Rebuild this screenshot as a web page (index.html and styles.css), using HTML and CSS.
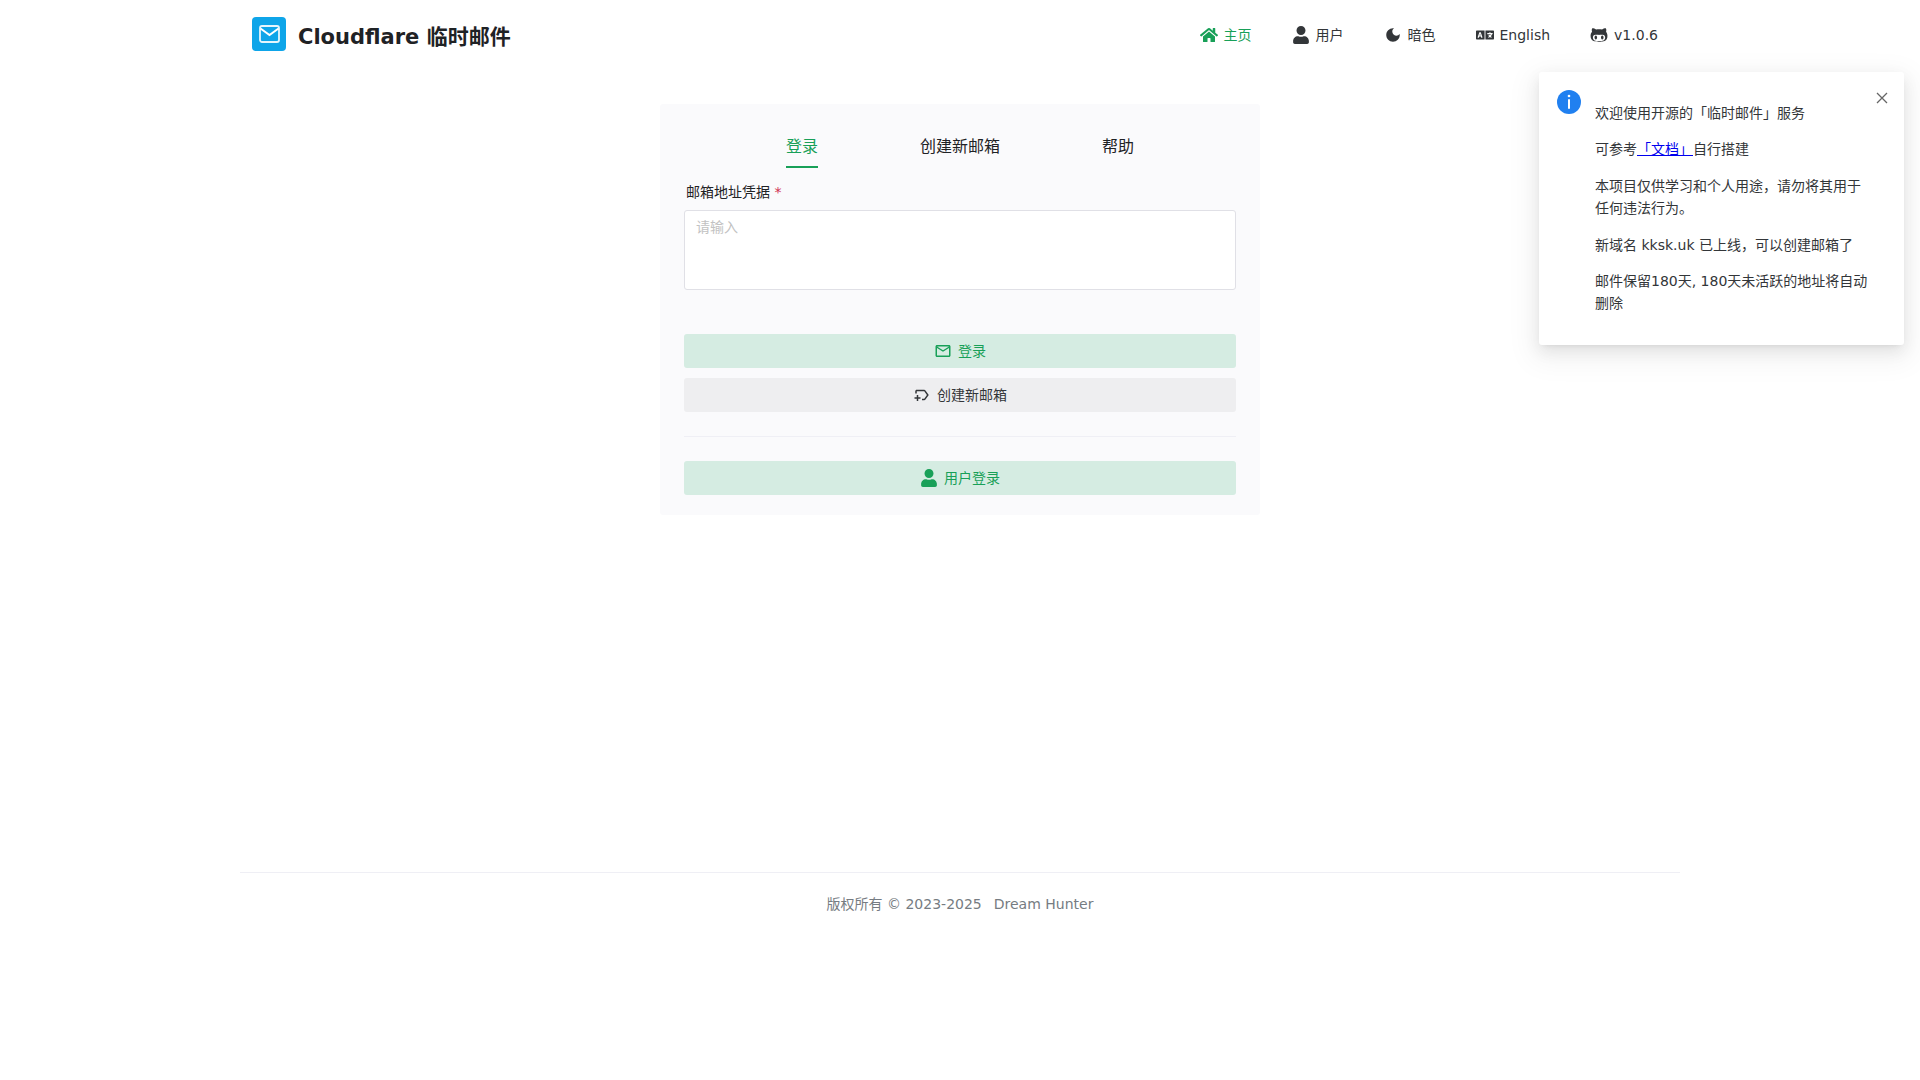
FILE: index.html
```html
<!DOCTYPE html>
<html lang="zh">
<head>
    <meta charset="UTF-8">
    <meta name="viewport" content="width=device-width, initial-scale=1.0">
    <title>Cloudflare 临时邮件</title>
    <link rel="stylesheet" href="styles.css">
</head>
<body>
    <div class="page">
        <header class="header">
            <div class="brand">
                <svg class="logo" viewBox="0 0 34 34" aria-hidden="true">
                    <rect width="34" height="34" rx="4" fill="#0ea5e9"/>
                    <rect x="8" y="9" width="19" height="16" rx="2" fill="none" stroke="#e6f6fd" stroke-width="1.800"/>
                    <path d="M8.500 11.500L17.500 18L26.500 11.500" fill="none" stroke="#fff" stroke-width="2"/>
                </svg>
                <h1>Cloudflare 临时邮件</h1>
            </div>
            <nav class="menu">
                <a href="#" class="active">
                    <svg class="icon" viewBox="0 0 576 512"><path d="M280.37 148.26L96 300.11V464a16 16 0 0 0 16 16l112.06-.29a16 16 0 0 0 15.92-16V368a16 16 0 0 1 16-16h64a16 16 0 0 1 16 16v95.64a16 16 0 0 0 16 16.05L464 480a16 16 0 0 0 16-16V300L295.67 148.26a12.19 12.19 0 0 0-15.3 0zM571.6 251.47L488 182.56V44.05a12 12 0 0 0-12-12h-56a12 12 0 0 0-12 12v72.61L318.47 43a48 48 0 0 0-61 0L4.34 251.47a12 12 0 0 0-1.6 16.9l25.5 31A12 12 0 0 0 45.15 301l235.22-193.74a12.19 12.19 0 0 1 15.3 0L530.9 301a12 12 0 0 0 16.9-1.6l25.5-31a12 12 0 0 0-1.7-16.93z"/></svg>
                    主页
                </a>
                <a href="#user">
                    <svg class="icon" viewBox="0 0 448 512"><path d="M224 256c70.7 0 128-57.3 128-128S294.7 0 224 0 96 57.3 96 128s57.3 128 128 128zm89.6 32h-16.7c-22.2 10.2-46.9 16-72.9 16s-50.6-5.8-72.9-16h-16.7C60.2 288 0 348.2 0 422.4V464c0 26.5 21.5 48 48 48h352c26.5 0 48-21.5 48-48v-41.6c0-74.2-60.2-134.4-134.4-134.4z"/></svg>
                    用户
                </a>
                <button type="button">
                    <svg class="icon" viewBox="0 0 24 24"><path d="M12 3c-4.970 0-9 4.030-9 9s4.030 9 9 9s9-4.030 9-9c0-.46-.04-.92-.1-1.360a5.389 5.389 0 0 1-4.400 2.260a5.403 5.403 0 0 1-3.140-9.800c-.44-.06-.9-.1-1.360-.1z"/></svg>
                    暗色
                </button>
                <button type="button">
                    <svg class="icon" viewBox="0 0 640 512"><path d="M152.1 236.2c-3.5-12.1-7.8-33.2-7.8-33.2h-.5s-4.3 21.1-7.8 33.2l-11.1 37.5H163zM616 96H336v320h280c13.3 0 24-10.7 24-24V120c0-13.3-10.7-24-24-24zm-24 120c0 6.6-5.4 12-12 12h-11.4c-6.9 23.6-21.7 47.4-42.7 69.9 8.4 6.4 17.1 12.5 26.1 18 5.5 3.4 7.3 10.5 4.1 16.2l-7.9 13.9c-3.4 5.9-10.9 7.8-16.7 4.3-12.6-7.8-24.5-16.1-35.4-24.9-10.9 8.7-22.7 17.1-35.4 24.9-5.8 3.5-13.3 1.6-16.7-4.3l-7.9-13.9c-3.2-5.6-1.4-12.8 4.2-16.2 9.3-5.7 18-11.7 26.1-18-7.9-8.4-14.9-17-21-25.7-4-5.7-2.2-13.6 3.7-17.1l6.5-3.9 7.3-4.3c5.4-3.2 12.4-1.7 16 3.4 5 7 10.8 14 17.4 20.9 13.5-14.2 23.8-28.900 30-43.200H412c-6.600 0-12-5.400-12-12v-16c0-6.600 5.400-12 12-12h64v-16c0-6.600 5.400-12 12-12h16c6.600 0 12 5.400 12 12v16h64c6.600 0 12 5.400 12 12zM0 120v272c0 13.3 10.7 24 24 24h280V96H24c-13.3 0-24 10.7-24 24zm58.900 216.100L116.400 167c1.700-4.900 6.200-8.100 11.400-8.100h32.500c5.100 0 9.700 3.300 11.400 8.100l57.500 169.100c2.600 7.800-3.100 15.900-11.400 15.900h-22.900a12 12 0 0 1-11.500-8.600l-9.400-31.900h-60.200l-9.100 31.800c-1.500 5.100-6.200 8.700-11.500 8.700H70.300c-8.200 0-14-8.100-11.400-15.900z"/></svg>
                    English
                </button>
                <a href="#github">
                    <svg class="icon" viewBox="0 0 480 512"><path d="M186.1 328.7c0 20.9-10.9 55.1-36.7 55.1s-36.7-34.2-36.7-55.1 10.9-55.1 36.7-55.1 36.7 34.2 36.7 55.1zM480 278.2c0 31.9-3.2 65.7-17.5 95-37.9 76.6-142.1 74.8-216.7 74.8-75.8 0-186.2 2.7-225.6-74.8-14.6-29-20.2-63.1-20.2-95 0-41.9 13.9-81.5 41.5-113.6-5.2-15.8-7.7-32.4-7.7-48.8 0-21.5 4.9-32.3 14.6-51.8 45.3 0 74.3 9 108.8 36 29-6.9 58.8-10 88.7-10 27 0 54.2 2.9 80.4 9.2 34-26.7 63-35.2 107.8-35.2 9.8 19.5 14.6 30.3 14.6 51.8 0 16.4-2.6 32.7-7.7 48.2 27.5 32.4 39 72.3 39 114.2zm-64.3 50.5c0-43.9-26.7-82.6-73.5-82.6-18.9 0-37 3.4-56 6-14.9 2.3-29.8 3.2-45.1 3.2-15.2 0-30.1-.9-45.1-3.2-18.7-2.6-37-6-56-6-46.8 0-73.5 38.7-73.5 82.6 0 87.8 80.4 101.3 150.4 101.3h48.2c70.3 0 150.6-13.4 150.6-101.3zm-82.6-55.1c-25.8 0-36.7 34.2-36.7 55.1s10.9 55.1 36.7 55.1 36.7-34.2 36.7-55.1-10.9-55.1-36.7-55.1z"/></svg>
                    v1.0.6
                </a>
            </nav>
        </header>

        <main class="main">
            <form class="card">
                <div class="tabs" role="tablist">
                    <button type="button" role="tab" class="tab active" aria-selected="true">登录</button>
                    <button type="button" role="tab" class="tab">创建新邮箱</button>
                    <button type="button" role="tab" class="tab">帮助</button>
                </div>

                <label class="label" for="credential">邮箱地址凭据 <span class="required">*</span></label>
                <textarea id="credential" class="textarea" placeholder="请输入"></textarea>

                <div class="actions">
                    <button type="button" class="btn primary">
                        <svg class="icon" viewBox="0 0 24 24"><path d="M22 6c0-1.100-.9-2-2-2H4c-1.100 0-2 .9-2 2v12c0 1.100.9 2 2 2h16c1.100 0 2-.9 2-2V6zm-2 0l-8 5l-8-5h16zm0 12H4V8l8 5l8-5v10z"/></svg>
                        登录
                    </button>
                    <button type="button" class="btn">
                        <svg class="icon" viewBox="0 0 24 24"><path d="M21 12l-4.370 6.160c-.37.52-.98.84-1.630.84h-3v-2h3l3.550-5L15 7H5v3H3V7c0-1.100.9-2 2-2h10c.65 0 1.260.31 1.630.84L21 12zm-11 3H7v-3H5v3H2v2h3v3h2v-3h3v-2z"/></svg>
                        创建新邮箱
                    </button>
                </div>
                <hr class="divider">
                <button type="button" class="btn primary">
                    <svg class="icon" viewBox="0 0 448 512"><path d="M224 256c70.7 0 128-57.3 128-128S294.7 0 224 0 96 57.3 96 128s57.3 128 128 128zm89.6 32h-16.7c-22.2 10.2-46.9 16-72.9 16s-50.6-5.8-72.9-16h-16.7C60.2 288 0 348.2 0 422.4V464c0 26.5 21.5 48 48 48h352c26.5 0 48-21.5 48-48v-41.6c0-74.2-60.2-134.4-134.4-134.4z"/></svg>
                    用户登录
                </button>
            </form>
        </main>

        <footer class="footer">
            <span>版权所有 © 2023-2025</span>
            <span>Dream Hunter</span>
        </footer>
    </div>

    <aside class="notification" role="status">
        <svg class="info" viewBox="0 0 24 24" aria-hidden="true">
            <circle cx="12" cy="12" r="12" fill="#2080f0"/>
            <circle cx="12" cy="6" r="1.300" fill="#fff"/>
            <rect x="11" y="9" width="2" height="10" rx="1" fill="#fff"/>
        </svg>
        <div class="content">
            <p>欢迎使用开源的「临时邮件」服务</p>
            <p>可参考<a href="#docs">「文档」</a>自行搭建</p>
            <p>本项目仅供学习和个人用途，请勿将其用于任何违法行为。</p>
            <p>新域名 kksk.uk 已上线，可以创建邮箱了</p>
            <p>邮件保留180天, 180天未活跃的地址将自动删除</p>
        </div>
        <button type="button" class="close" aria-label="关闭">
            <svg viewBox="0 0 12 12"><path d="M1 1L11 11M11 1L1 11" fill="none" stroke="currentColor" stroke-width="1.300"/></svg>
        </button>
    </aside>
</body>
</html>
```

FILE: styles.css
```css
* {
    box-sizing: border-box;
}
body {
    margin: 0;
    background: #fff;
    color: #333639;
    font-family: "DejaVu Sans", "Noto Sans CJK SC", sans-serif;
    font-size: 14px;
    line-height: 1.6;
}
button {
    border: none;
    background: none;
    color: inherit;
    font: inherit;
    cursor: pointer;
}
.page {
    width: 75%;
    margin: 0 auto;
}
.icon {
    width: 18px;
    height: 18px;
    fill: currentColor;
}

/* header */
.header {
    display: flex;
    justify-content: space-between;
    align-items: flex-start;
    height: 70px;
    padding: 17px 8px 0 12px;
}
.brand {
    display: flex;
    align-items: flex-start;
    gap: 12px;
}
.logo {
    width: 34px;
    height: 34px;
}
h1 {
    margin: 0;
    padding-top: 4px;
    color: #1f2225;
    font-size: 21px;
    font-weight: bold;
    line-height: 32px;
}
.menu {
    display: flex;
    gap: 12px;
}
.menu a,
.menu button {
    display: flex;
    align-items: center;
    gap: 6px;
    height: 36px;
    padding: 0 14px;
    text-decoration: none;
    color: #333639;
}
.menu .active {
    color: #18a058;
}

/* login card */
.main {
    display: flex;
    justify-content: center;
    align-items: flex-start;
    min-height: 802px;
    padding-top: 34px;
}
.card {
    width: 100%;
    max-width: 600px;
    padding: 24px 24px 20px;
    border-radius: 3px;
    background: #fafafc;
}
.tabs {
    display: flex;
    justify-content: space-evenly;
}
.tab {
    height: 40px;
    padding: 0;
    border-bottom: 2px solid transparent;
    color: #1f2225;
    font-size: 16px;
}
.tab.active {
    border-color: #18a058;
    color: #18a058;
}
.label {
    display: block;
    padding: 13px 2px 7px;
    color: #1f2225;
}
.required {
    color: #d03050;
}
.textarea {
    display: block;
    width: 100%;
    height: 80px;
    padding: 5px 11px;
    border: 1px solid #e0e0e6;
    border-radius: 3px;
    background: #fff;
    color: #333639;
    font: inherit;
    resize: none;
}
.textarea::placeholder {
    color: #c2c2c2;
}
.actions {
    display: grid;
    gap: 10px;
    margin-top: 44px;
}
.btn {
    display: flex;
    justify-content: center;
    align-items: center;
    gap: 6px;
    width: 100%;
    height: 34px;
    border-radius: 3px;
    background: #eeeef0;
}
.btn.primary {
    background: #d5ece2;
    color: #18a058;
}
.divider {
    margin: 24px 0;
    border: none;
    border-top: 1px solid #efeff5;
}

/* footer */
.footer {
    display: flex;
    justify-content: center;
    gap: 12px;
    padding: 20px 0;
    border-top: 1px solid #efeff5;
    color: #767c82;
}

/* notification */
.notification {
    position: absolute;
    top: 72px;
    right: 16px;
    display: flex;
    width: 365px;
    padding: 16px 18px;
    border-radius: 3px;
    background: #fff;
    box-shadow: 0 3px 6px -4px rgba(0, 0, 0, .12), 0 6px 16px 0 rgba(0, 0, 0, .08), 0 9px 28px 8px rgba(0, 0, 0, .05);
}
.info {
    flex: none;
    width: 24px;
    height: 24px;
    margin: 2px 14px 0 0;
}
.content {
    flex: 1;
}
.content p {
    margin: 14px 0;
}
.content a {
    color: #0000ee;
}
.close {
    flex: none;
    align-self: flex-start;
    width: 16px;
    height: 16px;
    margin: 2px -4px 0 0;
    padding: 2px;
    color: #666;
}
.close svg {
    display: block;
}
```
